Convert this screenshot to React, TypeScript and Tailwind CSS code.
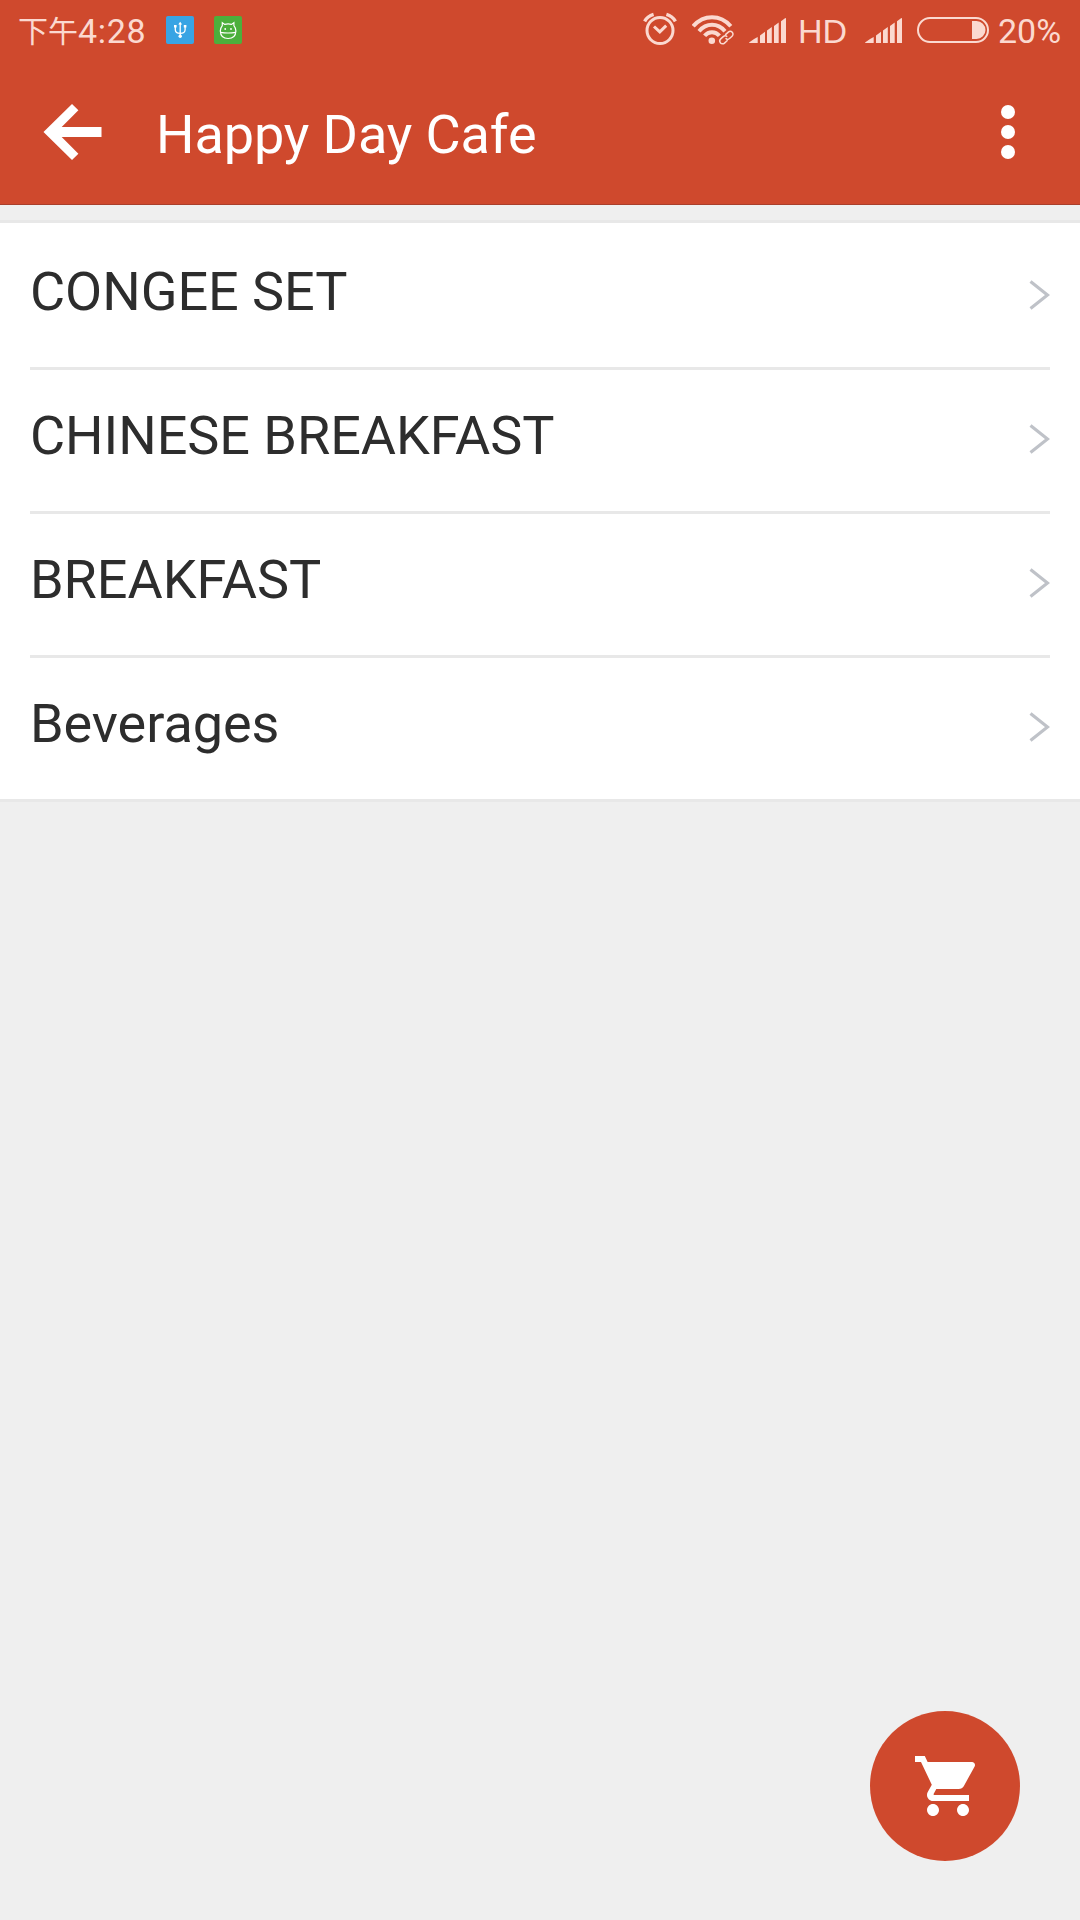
import React from "react";

const categories = ["CONGEE SET", "CHINESE BREAKFAST", "BREAKFAST", "Beverages"];

const AlarmIcon = () => (
  <svg width="34" height="34" viewBox="0 0 34 34" fill="none" stroke="currentColor" strokeWidth="3">
    <circle cx="17" cy="18.5" r="13" />
    <path d="M11 14.5l5.8 5.4 6.4-6.2" />
    <path d="M1.6 9.4Q4.5 4.2 10.6 2.4M32.4 9.4Q29.5 4.2 23.4 2.4" strokeWidth="3.4" />
  </svg>
);

const WifiIcon = () => (
  <svg width="42" height="30" viewBox="0 0 42 30" fill="none" stroke="currentColor" strokeWidth="4">
    <path d="M1.2 11.2Q9 2.2 20 2.2T38.8 11.2" />
    <path d="M7 16.2Q12.5 9.8 20 9.8T33 16.2" />
    <path d="M12.6 20.8Q15.6 17.2 20 17.2T27.4 20.8" />
    <circle cx="19.8" cy="25.8" r="3.3" fill="currentColor" stroke="none" />
    <g transform="rotate(-42 34.4 22.6)" strokeWidth="1.5">
      <path d="M33.5 25.4h-4.2a2.800 2.800 0 0 1 0-5.600h3.400a2.800 2.800 0 0 1 2.800 2.800" />
      <path d="M35.3 19.8h4.2a2.800 2.800 0 0 1 0 5.600h-3.400a2.800 2.800 0 0 1-2.800-2.800" />
    </g>
  </svg>
);

const SignalIcon = () => (
  <svg width="37" height="26" viewBox="0 0 37 26" fill="currentColor">
    <path d="M0 24.6Q4 21.2 8.7 19V25H.4zM11 17.4l5-3.6V25h-5zM18 12.4l4.8-3.5V25H18zM25 8l4.7-3.4V25H25zM32 3.3L36 .3q1-.6 1 .4V25h-5z" />
  </svg>
);

const BatteryIcon = () => (
  <svg width="72" height="26" viewBox="0 0 72 26">
    <rect x="1" y="1" width="70" height="24" rx="12" fill="none" stroke="currentColor" strokeWidth="2" />
    <path d="M55 4h4.500a9 9 0 0 1 0 18H55z" fill="currentColor" />
  </svg>
);

const UsbIcon = () => (
  <svg width="28" height="28" viewBox="0 0 28 28" fill="none" stroke="#fff" strokeWidth="1.3">
    <path d="M14.2 7v13M9.3 9.5v4.2q0 3.6 4.9 3.6t4.9-3.6V9.5" />
    <path d="M12.3 8.6l1.9-2.8 1.9 2.8z" fill="#fff" stroke="none" />
    <path d="M8 9h2.600v2.600H8zM17.800 9h2.600v2.600h-2.600z" fill="#fff" stroke="none" />
    <circle cx="14.2" cy="20.3" r="1.7" fill="#fff" stroke="none" />
  </svg>
);

// round head with two ears and a split jaw
const AssistantIcon = () => (
  <svg width="28" height="28" viewBox="0 0 28 28" fill="none" stroke="#fff" strokeWidth="1.2">
    <path d="M8.300 9.600V6.700l2.400 1.700q3.400-1.200 6.800 0l2.400-1.700v2.900q2 2.400 2 5.400-.3 7.500-7.800 7.500T6.300 15q0-3 2-5.400z" />
    <path d="M6.300 16.400q7.800 1.200 15.600 0" />
    <circle cx="11.200" cy="13" r=".9" fill="#fff" stroke="none" />
    <circle cx="17" cy="13" r=".9" fill="#fff" stroke="none" />
  </svg>
);

const StatusBar = () => (
  <div className="flex h-[60px] items-start justify-between pl-[18px] pr-[18px] text-[#fbd9d0] text-[34px] leading-[38px]">
    <div className="flex">
      <span className="flex pt-[12px] whitespace-nowrap">
        <span className="-mt-[2px] w-[60px] font-['Noto_Sans_CJK_SC',sans-serif] text-[30px] leading-[38px]">下午</span>
        <span className="tracking-[0.700px]">4:28</span>
      </span>
      <span className="ml-[20px] mt-[16px] h-[28px] w-[28px] rounded-[2px] bg-[#38a4e4]">
        <UsbIcon />
      </span>
      <span className="ml-[20px] mt-[16px] h-[28px] w-[28px] rounded-[2px] bg-[#4caf3c]">
        <AssistantIcon />
      </span>
    </div>
    <div className="flex">
      <span className="mt-[12px] mr-[15px]"><AlarmIcon /></span>
      <span className="mt-[15px] mr-[15px]"><WifiIcon /></span>
      <span className="mt-[18px] mr-[12px]"><SignalIcon /></span>
      <span className="mt-[12px] mr-[18px] w-[49px] font-['Liberation_Sans',sans-serif]">HD</span>
      <span className="mt-[18px] mr-[15px]"><SignalIcon /></span>
      <span className="mt-[17px] mr-[9px]"><BatteryIcon /></span>
      <span className="mt-[12px] w-[64px] whitespace-nowrap">20%</span>
    </div>
  </div>
);

const TitleBar = () => (
  <div className="flex h-[144px] items-center pl-[43px] pr-[65px] text-white">
    <svg width="59" height="58" viewBox="0 0 60 58" fill="currentColor">
      <path d="M29.5.5L36 7 19 24h40.500v10H19l17 17-6.500 6.500L.5 29z" />
    </svg>
    <h1 className="ml-[54px] pt-[5px] text-[54px] leading-[64px] font-normal tracking-[-0.1px]">Happy Day Cafe</h1>
    <button className="ml-auto flex flex-col gap-[6px]" aria-label="More">
      <span className="h-[14px] w-[14px] rounded-full bg-white" />
      <span className="h-[14px] w-[14px] rounded-full bg-white" />
      <span className="h-[14px] w-[14px] rounded-full bg-white" />
    </button>
  </div>
);

const CategoryRow: React.FC<{ name: string; last: boolean }> = ({ name, last }) => (
  <li
    className={
      last
        ? "flex h-[141px] items-center justify-between"
        : "flex h-[144px] items-center justify-between border-b-[3px] border-[#e8e8e8]"
    }
  >
    <span className="pb-[10px] text-[54px] leading-[64px] tracking-[-0.05px] text-[#2d2d2d]">{name}</span>
    <svg className="mb-[3px]" width="21" height="30" viewBox="0 0 21 30" fill="none" stroke="#bfc2c8" strokeWidth="3.2">
      <path d="M1.500 1.500L18.500 15 1.500 28.500" />
    </svg>
  </li>
);

export default function App() {
  return (
    <div className="relative h-[1920px] w-[1080px] overflow-hidden bg-[#efefef] font-[Roboto,'Noto_Sans_CJK_SC',sans-serif]">
      <header className="h-[205px] border-b border-[#a93f2b] bg-[#cf492d]">
        <StatusBar />
        <TitleBar />
      </header>

      <ul className="mt-[15px] border-y-[3px] border-[#e8e8e8] bg-white px-[30px] pt-[3px]">
        {categories.map((name, i) => (
          <CategoryRow key={name} name={name} last={i === categories.length - 1} />
        ))}
      </ul>

      <button
        className="absolute right-[60px] bottom-[59px] flex h-[150px] w-[150px] items-center justify-center rounded-full bg-[#cf492d] pl-[6px]"
        aria-label="Cart"
      >
        <svg width="72" height="72" viewBox="0 0 24 24" fill="#fff">
          <path d="M7 18c-1.100 0-1.990.9-1.990 2S5.900 22 7 22s2-.9 2-2-.9-2-2-2zM1 2v2h2l3.600 7.590-1.350 2.450c-.16.280-.25.610-.25.960 0 1.100.9 2 2 2h12v-2H7.420c-.14 0-.25-.11-.25-.25l.03-.12.900-1.630h7.450c.75 0 1.410-.41 1.750-1.030l3.580-6.490c.08-.14.120-.31.120-.48 0-.55-.45-1-1-1H5.210l-.94-2H1zm16 16c-1.100 0-1.990.9-1.990 2s.89 2 1.990 2 2-.9 2-2-.9-2-2-2z" />
        </svg>
      </button>
    </div>
  );
}
